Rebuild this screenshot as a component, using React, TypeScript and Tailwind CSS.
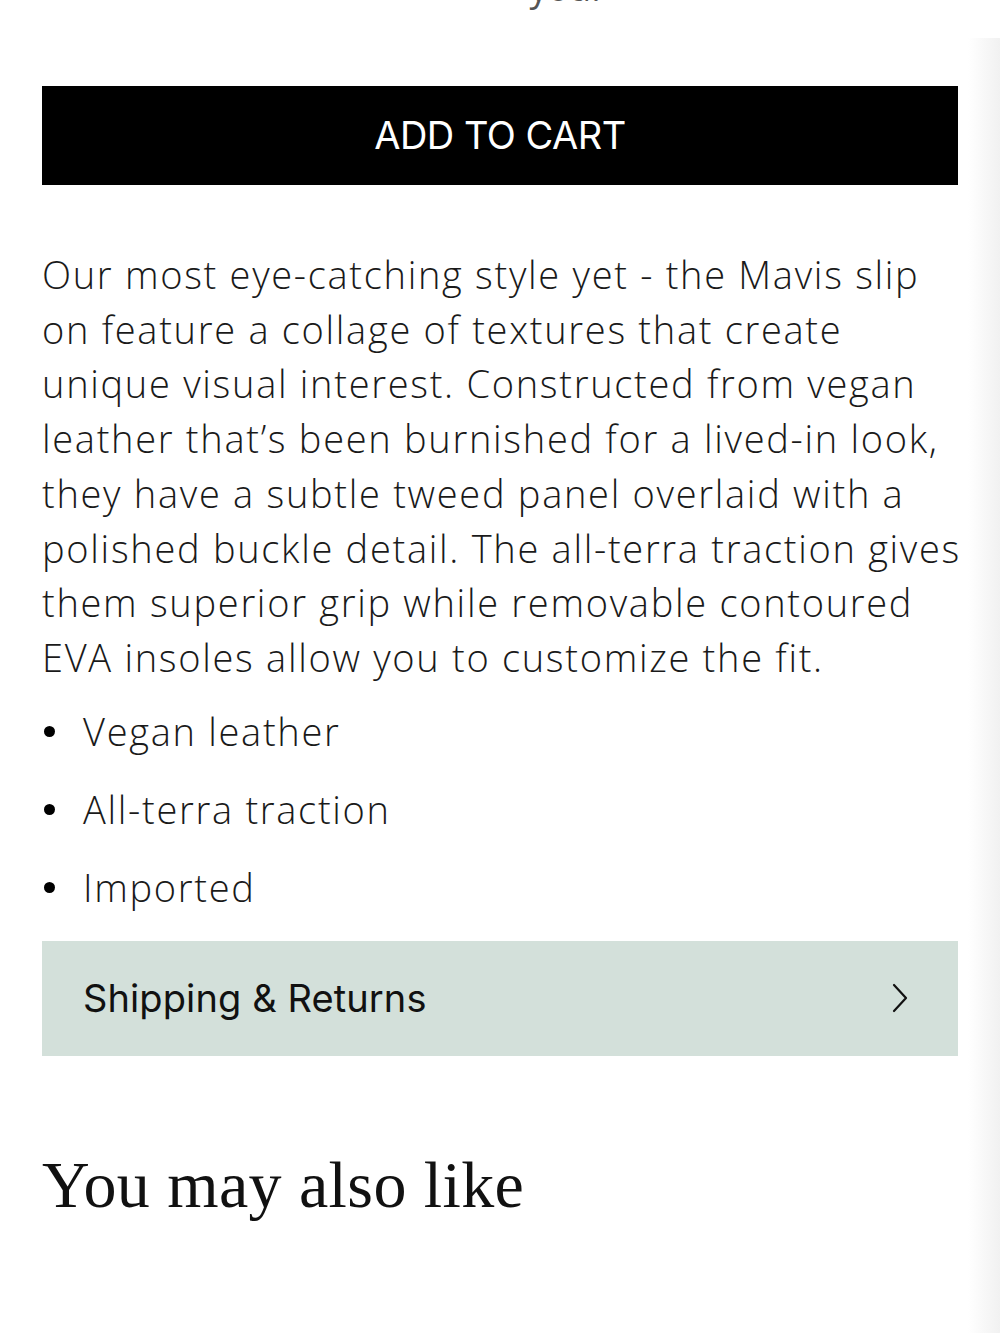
const description = [
  'Our most eye-catching style yet - the Mavis slip',
  'on feature a collage of textures that create',
  'unique visual interest. Constructed from vegan',
  'leather that\u2019s been burnished for a lived-in look,',
  'they have a subtle tweed panel overlaid with a',
  'polished buckle detail. The all-terra traction gives',
  'them superior grip while removable contoured',
  'EVA insoles allow you to customize the fit.',
]

const features = ['Vegan leather', 'All-terra traction', 'Imported']

export default function App() {
  return (
    <div className="relative min-h-[1333px] bg-white overflow-hidden">
      {/* scroll edge shading */}
      <div className="pointer-events-none absolute right-0 top-[38px] bottom-0 w-[32px] bg-gradient-to-r from-white to-[#f1f1f1]" />

      <div className="h-[12px] overflow-hidden text-center">
        <p className="-mt-[30px] text-[36px] leading-[36px] text-[#555] font-['Open_Sans',sans-serif] pl-[130px]">you.</p>
      </div>

      <div className="px-[42px] w-[1000px]">
        <button className="mt-[74px] flex h-[99px] w-[916px] items-center justify-center bg-black text-white font-['Inter',sans-serif] text-[38px] tracking-[-0.5px]">
          ADD TO CART
        </button>

        <div className="mt-[62px] font-['Open_Sans',sans-serif] font-light text-[38px] leading-[54.7px] text-[#1a1a1a] tracking-[1.7px]">
          {description.map((line) => (
            <div key={line} className="whitespace-nowrap">{line}</div>
          ))}
        </div>

        <ul className="mt-[8px] font-['Open_Sans',sans-serif] font-light text-[38px] text-[#1a1a1a] tracking-[1.7px]">
          {features.map((f) => (
            <li key={f} className="flex h-[78px] items-center">
              <span className="ml-[2px] mr-[28px] h-[11px] w-[11px] rounded-full bg-black" />
              {f}
            </li>
          ))}
        </ul>

        <div className="mt-[14px] flex h-[115px] items-center justify-between bg-[#d3e0da] pl-[41px] pr-[50px]">
          <span className="font-['Inter',sans-serif] text-[38px] tracking-[0.1px] text-[#111]">Shipping &amp; Returns</span>
          <svg width="16" height="30" viewBox="0 0 16 30" fill="none" stroke="#111" strokeWidth="2.2" strokeLinecap="round" strokeLinejoin="round">
            <polyline points="2,2 14,15 2,28" />
          </svg>
        </div>

        <h2 className="mt-[94px] font-['Liberation_Serif',serif] text-[66px] leading-[70px] tracking-[0.4px] text-[#111]">
          You may also like
        </h2>
      </div>
    </div>
  )
}
